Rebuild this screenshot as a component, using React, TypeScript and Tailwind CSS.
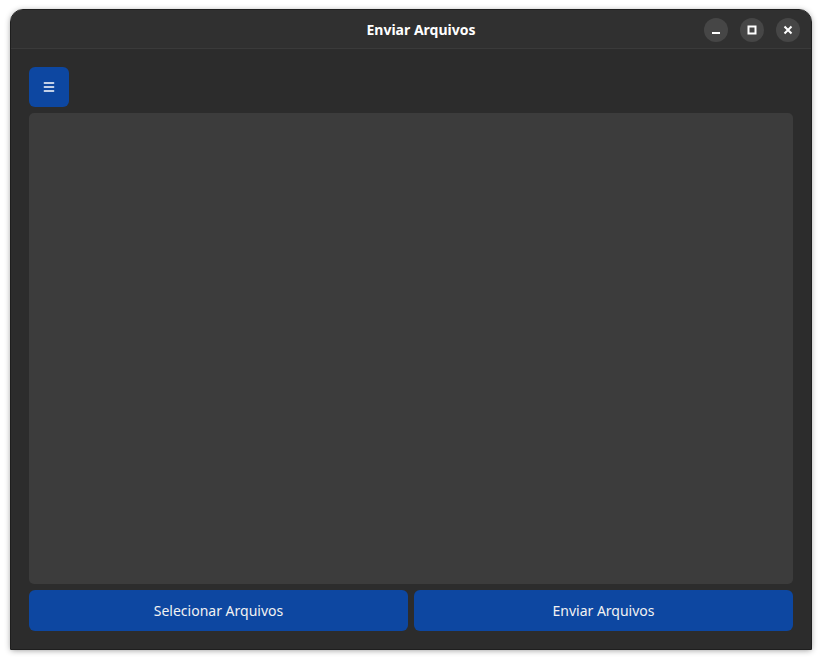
import { Menu } from 'lucide-react';

function WinButton({ kind }: { kind: 'min' | 'max' | 'close' }) {
  return (
    <button
      type="button"
      className="w-6 h-6 rounded-full bg-[#464646] flex items-center justify-center text-white"
    >
      {kind === 'min' && (
        <svg width="10" height="10" viewBox="0 0 10 10">
          <rect x="1" y="7" width="8" height="2" fill="currentColor" />
        </svg>
      )}
      {kind === 'max' && (
        <svg width="10" height="10" viewBox="0 0 10 10">
          <rect x="1.5" y="1.5" width="7" height="7" fill="none" stroke="currentColor" strokeWidth="2" />
        </svg>
      )}
      {kind === 'close' && (
        <svg width="10" height="10" viewBox="0 0 10 10">
          <path d="M1.5 1.5 L8.5 8.5 M8.5 1.5 L1.5 8.5" stroke="currentColor" strokeWidth="2" />
        </svg>
      )}
    </button>
  );
}

export default function App() {
  return (
    <div
      className="w-[822px] h-[660px] bg-white pt-[10px] pl-[11px]"
      style={{ fontFamily: '"Noto Sans", "Open Sans", sans-serif' }}
    >
      <div className="w-[800px] h-[639px] flex flex-col bg-[#2c2c2c] rounded-t-[12px] overflow-hidden shadow-[0_1px_6px_rgba(0,0,0,0.45)] outline outline-1 outline-[#1e1e1e]">
        <div className="h-[39px] shrink-0 relative flex items-center justify-center bg-[#303030] border-b border-[#3a3a3a]">
          <span className="text-[14px] font-bold text-white ml-[20px] mt-[1px]">Enviar Arquivos</span>
          <div className="absolute right-[11px] top-[8px] flex gap-3">
            <WinButton kind="min" />
            <WinButton kind="max" />
            <WinButton kind="close" />
          </div>
        </div>

        <div className="flex-1 flex flex-col gap-[6px] px-[18px] pt-[18px] pb-[18px]">
          <button
            type="button"
            className="w-10 h-10 rounded-md bg-[#0d47a1] flex items-center justify-center text-white"
          >
            <Menu className="w-[14px] h-[14px]" strokeWidth={2.5} />
          </button>

          <div className="flex-1 rounded-[5px] bg-[#3c3c3c]" />

          <div className="flex gap-[6px] h-[41px]">
            <button
              type="button"
              className="flex-1 rounded-md bg-[#0d47a1] text-[#f2f2f2] text-[14px]"
            >
              Selecionar Arquivos
            </button>
            <button
              type="button"
              className="flex-1 rounded-md bg-[#0d47a1] text-[#f2f2f2] text-[14px]"
            >
              Enviar Arquivos
            </button>
          </div>
        </div>
      </div>
    </div>
  );
}
